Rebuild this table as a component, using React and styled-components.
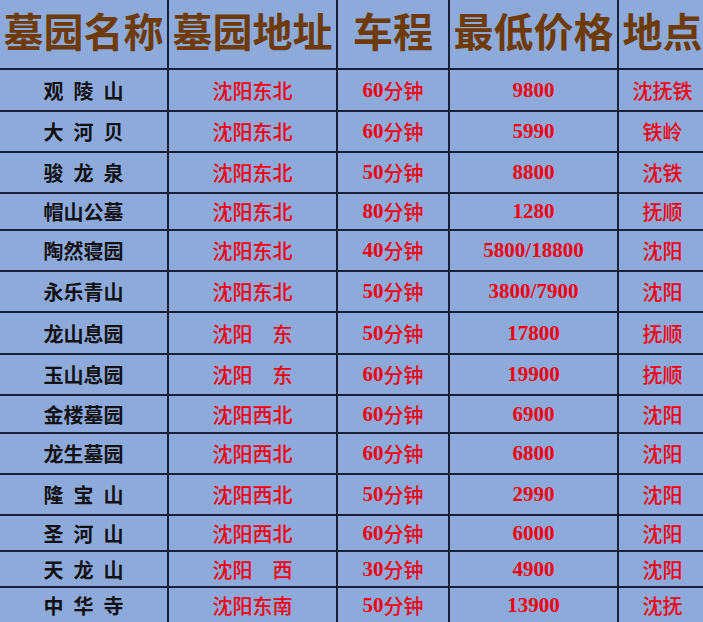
import React from 'react';
import styled, { createGlobalStyle } from 'styled-components';

const GlobalStyle = createGlobalStyle`
  html, body {
    margin: 0;
    padding: 0;
    background: #8eaadb;
    overflow: hidden;
  }
`;

const Sheet = styled.div`
  width: 706px;
  background: #8eaadb;
`;

const Row = styled.div`
  display: grid;
  grid-template-columns: 169px 169px 112px 169px 87px;
  height: ${(p) => p.$h}px;
  box-sizing: border-box;
  border-bottom: 2px solid #172238;
`;

const Cell = styled.div`
  display: flex;
  align-items: center;
  justify-content: center;
  box-sizing: border-box;
  border-right: 2px solid #172238;
  white-space: pre;
  &:last-child {
    border-right: none;
  }
`;

const HeadCell = styled(Cell)`
  font-family: "Noto Sans CJK SC", sans-serif;
  font-weight: 700;
  font-size: 40px;
  color: #6e3a08;
  padding-bottom: 8px;
`;

const NameCell = styled(Cell)`
  font-family: "Noto Sans CJK SC", sans-serif;
  font-weight: 700;
  font-size: 20px;
  color: #111;
`;

const RedCell = styled(Cell)`
  font-family: "Liberation Serif", "Noto Sans CJK SC", serif;
  font-weight: ${(p) => (p.$bold ? 700 : 500)};
  font-size: ${(p) => p.$size || 20}px;
  color: #f00010;
`;

const Unit = styled.span`
  font-family: "Noto Sans CJK SC", sans-serif;
  font-weight: 500;
  font-size: 20px;
`;

const headers = ['墓园名称', '墓园地址', '车程', '最低价格', '地点'];

const rows = [
  ['观\u2002陵\u2002山', '沈阳东北', '60', '9800', '沈抚铁', 42],
  ['大\u2002河\u2002贝', '沈阳东北', '60', '5990', '铁岭', 41],
  ['骏\u2002龙\u2002泉', '沈阳东北', '50', '8800', '沈铁', 41],
  ['帽山公墓', '沈阳东北', '80', '1280', '抚顺', 37],
  ['陶然寝园', '沈阳东北', '40', '5800/18800', '沈阳', 41],
  ['永乐青山', '沈阳东北', '50', '3800/7900', '沈阳', 41],
  ['龙山息园', '沈阳　东', '50', '17800', '抚顺', 42],
  ['玉山息园', '沈阳　东', '60', '19900', '抚顺', 41],
  ['金楼墓园', '沈阳西北', '60', '6900', '沈阳', 38],
  ['龙生墓园', '沈阳西北', '60', '6800', '沈阳', 41],
  ['隆\u2002宝\u2002山', '沈阳西北', '50', '2990', '沈阳', 41],
  ['圣\u2002河\u2002山', '沈阳西北', '60', '6000', '沈阳', 36],
  ['天\u2002龙\u2002山', '沈阳　西', '30', '4900', '沈阳', 36],
  ['中\u2002华\u2002寺', '沈阳东南', '50', '13900', '沈抚', 36],
];

export default function App() {
  return (
    <>
      <GlobalStyle />
      <Sheet>
        <Row $h={70}>
          {headers.map((h) => (
            <HeadCell key={h}>{h}</HeadCell>
          ))}
        </Row>
        {rows.map(([name, addr, mins, price, place, h]) => (
          <Row key={name} $h={h}>
            <NameCell>{name}</NameCell>
            <RedCell>{addr}</RedCell>
            <RedCell $bold $size={21}>
              {mins}
              <Unit>分钟</Unit>
            </RedCell>
            <RedCell $bold $size={21}>{price}</RedCell>
            <RedCell>{place}</RedCell>
          </Row>
        ))}
      </Sheet>
    </>
  );
}
